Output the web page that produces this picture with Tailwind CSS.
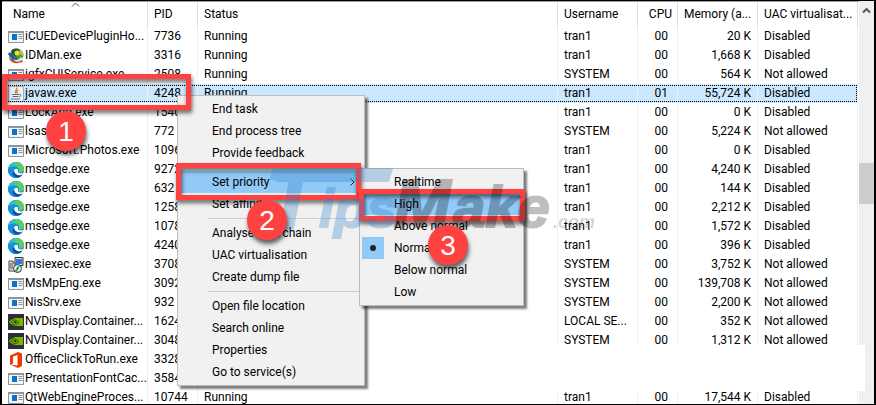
<!DOCTYPE html>
<html lang="en">
<head>
    <meta charset="UTF-8">
    <meta name="viewport" content="width=device-width, initial-scale=1.0">
    <title>Task Manager - Details</title>
    <script src="https://cdn.jsdelivr.net/npm/@tailwindcss/browser@4"></script>
</head>
<body class="bg-black font-[Roboto,'Noto_Sans',sans-serif] text-[12px] leading-[19px] text-black">

    <!-- Icon set -->
    <svg class="hidden" aria-hidden="true">
        <symbol id="exe" viewBox="0 0 16 16">
            <path d="M.5 2.500h15v11H.5z" fill="#f4f6f8" stroke="#8d959b"/>
            <path d="M0 2h16v2H0z" fill="#8d959b"/>
            <path d="M4 5h5v6H4z" fill="#0c72d0"/>
            <path d="M10.500 5.500h4M10.500 7.500h4M10.500 9.500h4" stroke="#8d959b"/>
        </symbol>
        <symbol id="idm" viewBox="0 0 16 16">
            <circle cx="9" cy="7" r="6.500" fill="#4fa32d"/>
            <path d="M3 3C5-1 12 0 14 4c-3-1-5 2-6 5C6 8 4 6 3 3z" fill="#254d28"/>
            <circle cx="9" cy="5" r="2.500" fill="#f3dc38"/>
            <path d="M11 1c3 1 5 4 4 7l-3-2z" fill="#a7d44c"/>
            <path d="M0 6c1-2 4-2 5 1l2 3 3-1-2 6-6-3 2-1-2-2z" fill="#1f58b5"/>
            <path d="M1 8c2 4 6 5 10 4l2-3 2 5-5 1C5 16 1 13 1 8z" fill="#c8502c"/>
            <path d="M5 11c3 2 6 1 8-2l2 2c-3 3-7 4-10 0z" fill="#dfe8ee"/>
        </symbol>
        <symbol id="java" viewBox="0 0 16 16">
            <path d="M.5.5h15v15H.5z" fill="#eef1f3" stroke="#a3abb1"/>
            <path d="M8.500 1.500c2 2-3 3-.5 6M10.500 4c-2 1-2 2-1 3.500" fill="none" stroke="#e8761f" stroke-width="1.300"/>
            <path d="M4 8.500h7M4.500 10.500h6M3 13h9" stroke="#4b6f92" stroke-width="1.200"/>
            <path d="M11 8.500c3-.5 2 2 0 2.500" fill="none" stroke="#4b6f92"/>
        </symbol>
        <symbol id="edge" viewBox="0 0 16 16">
            <circle cx="8" cy="8" r="8" fill="#0c6fc4"/>
            <path d="M0 7C1 2 5 0 8 0c5 0 8 3.500 8 7 0 3-3 4-5 3.500-1-.5-.5-1 0-2C11 5 5 3 0 7z" fill="#36c3b8"/>
            <path d="M8 0c5 0 8 3.500 8 7 0 3-3 4-5 3.500-1-.5-.5-1 0-2C12 5 9 4 7 4z" fill="#56cf68"/>
            <path d="M0 8c1-4 8-5 10-1-4-1-5 2-4 5 1 2 3 3.500 5 3.500C5 17.500 0 13 0 8z" fill="#1590df"/>
            <path d="M6 9c0-2 3-3 4-1.500.5 1-.5 1.500 0 2.500 1 2 4 1.500 5.500.5l-1 2c-2 2-8 1-8.500-3.500z" fill="#fff"/>
            <path d="M6 9c.5 4 5 5.500 8.500 3.500-2 4-9 4-10-1z" fill="#0d4fa0"/>
        </symbol>
        <symbol id="msi" viewBox="0 0 16 16">
            <path d="M7 .5h8v8H7z" fill="#d6dade" stroke="#333"/>
            <path d="M8 2h6v5H8z" fill="#2d7de0"/>
            <path d="M1 4h4v2h2v8H1z" fill="#e1e4e6" stroke="#444"/>
            <path d="M2 7h3M2 9h3M2 11h3" stroke="#444"/>
            <circle cx="9.500" cy="11.500" r="4" fill="#e8f4f2" stroke="#333"/>
            <path d="M9.500 11.500V8a3.500 3.500 0 0 1 3 2z" fill="#1bd3d9"/>
            <path d="M9.500 11.500l-3 2a3.500 3.500 0 0 0 3 1.500z" fill="#2bb24c"/>
            <circle cx="9.500" cy="11.500" r="1" fill="#222"/>
        </symbol>
        <symbol id="nvidia" viewBox="0 0 16 16">
            <path d="M0 0h16v16H0z" fill="#2b2f3a"/>
            <path d="M6 4h9v8H6z" fill="#76b900"/>
            <path d="M1 8C3 4.500 8 3.500 12 8 9 12.500 4 12.500 1 8z" fill="#76b900"/>
            <path d="M3 8C5 5 8 5.500 11 8.500c-3 3.500-6 2.500-8-.5" fill="none" stroke="#263414" stroke-width=".8"/>
            <path d="M5.500 8c1-1.500 2.500-1 3.500.5-1 1-2.500 1-3.500-.5z" fill="#263414"/>
        </symbol>
        <symbol id="office" viewBox="0 0 16 16">
            <path d="M2 3.500L10 0l4 1.500v12.500l-4 2-8-3.500 7.500 1V3L5 4.500v7L2 13z" fill="#eb3c00"/>
        </symbol>
    </svg>

    <main class="relative flex h-screen overflow-hidden border-x-2 border-t-1 border-b-1 border-black bg-white">

        <!-- Process list -->
        <div class="min-w-0 flex-1 border-t border-[#a0a0a0] pr-px">
            <table class="w-full table-fixed border-separate border-spacing-0 whitespace-nowrap">
                <colgroup>
                    <col class="w-[146px]">
                    <col class="w-[50px]">
                    <col>
                    <col class="w-[80px]">
                    <col class="w-[40px]">
                    <col class="w-[80px]">
                    <col class="w-[100px]">
                </colgroup>
                <thead>
                    <tr class="h-[25px] text-left *:border-r *:border-[#e0e0e0] *:pl-[6px] *:font-normal">
                        <th class="relative">
                            <span class="pl-[5px]">Name</span>
                            <svg class="absolute top-0 left-[69px] h-[5px] w-[9px]" viewBox="0 0 9 5"><path d="M1 4.500L4.500 1 8 4.500" fill="none" stroke="#555"/></svg>
                        </th>
                        <th>PID</th>
                        <th>Status</th>
                        <th>Username</th>
                        <th class="pr-[5px] text-right">CPU</th>
                        <th>Memory (a...</th>
                        <th>UAC virtualisat...</th>
                    </tr>
                </thead>
                <tbody id="processes"></tbody>
            </table>
        </div>

        <!-- Scrollbar -->
        <div class="flex w-[15px] flex-col items-center bg-[#f0f0f0] pt-[6px]">
            <svg class="h-[7px] w-[9px]" viewBox="0 0 9 7"><path d="M1 5.500L4.500 2 8 5.500" fill="none" stroke="#555" stroke-width="2"/></svg>
            <div class="mt-[149px] h-[41px] w-full bg-[#cdcdcd]"></div>
        </div>

        <!-- Blanked out area -->
        <div class="absolute top-[344px] right-[9px] left-[364px] h-[46px] bg-white"></div>

        <!-- Context menu -->
        <div role="menu" class="absolute top-[94px] left-[175px] flex w-[188px] flex-col border border-[#bdbdbd] bg-[#f1f1f1] p-[2px] leading-[22px] shadow-[3px_3px_2px_rgba(0,0,0,0.5)] *:[button]:h-[22px] *:[button]:pl-[32px] *:[button]:text-left *:[hr]:my-[3px] *:[hr]:ml-[28px] *:[hr]:border-[#d0d0d0]">
            <button role="menuitem">End task</button>
            <button role="menuitem">End process tree</button>
            <button role="menuitem">Provide feedback</button>
            <hr>
            <button role="menuitem" aria-haspopup="true" class="flex items-center justify-between bg-[#91c9f7] pr-[7px]">Set priority
                <svg class="h-[8px] w-[5px]" viewBox="0 0 5 8"><path d="M.5.5L4 4 .5 7.500" fill="none" stroke="#222"/></svg>
            </button>
            <button role="menuitem">Set affinity</button>
            <hr>
            <button role="menuitem">Analyse wait chain</button>
            <button role="menuitem">UAC virtualisation</button>
            <button role="menuitem">Create dump file</button>
            <hr>
            <button role="menuitem">Open file location</button>
            <button role="menuitem">Search online</button>
            <button role="menuitem">Properties</button>
            <button role="menuitem">Go to service(s)</button>
        </div>

        <!-- Set priority submenu -->
        <div role="menu" class="absolute top-[167px] left-[357px] flex w-[165px] flex-col border border-[#bdbdbd] bg-[#f1f1f1] p-[2px] leading-[22px] shadow-[3px_3px_2px_rgba(0,0,0,0.5)] *:h-[22px] *:pl-[32px] *:text-left">
            <button role="menuitemradio">Realtime</button>
            <button role="menuitemradio" class="bg-[#91c9f7]">High</button>
            <button role="menuitemradio">Above normal</button>
            <button role="menuitemradio" aria-checked="true" class="relative">
                <span class="absolute top-0 left-0 flex size-[22px] items-center justify-center bg-[#91c9f7]"><span class="size-[6px] rounded-full bg-[#222]"></span></span>Normal
            </button>
            <button role="menuitemradio">Below normal</button>
            <button role="menuitemradio">Low</button>
        </div>

        <!-- Highlight frames -->
        <div class="absolute top-[73px] left-0 h-[36px] w-[189px] border-[5px] border-[#ff4141] drop-shadow-[1px_3px_2px_rgba(0,0,0,0.6)]"></div>
        <div class="absolute top-[162px] left-[174px] h-[37px] w-[185px] border-[5px] border-[#ff4141] drop-shadow-[1px_3px_2px_rgba(0,0,0,0.6)]"></div>
        <div class="absolute top-[188px] left-[357px] h-[32px] w-[166px] border-[5px] border-[#ff4141] drop-shadow-[1px_3px_2px_rgba(0,0,0,0.6)]"></div>

        <!-- Watermark -->
        <svg class="pointer-events-none absolute top-[160px] left-[268px] h-[80px] w-[340px] overflow-visible font-['Liberation_Sans',sans-serif] font-bold italic" viewBox="0 0 340 80">
            <g fill="#2f7fc8" stroke="#2f7fc8" stroke-width="2" opacity=".3">
                <path d="M10 8h112l-4 12H7z"/>
                <text x="-5" y="67" font-size="86">T</text>
                <text x="49" y="66" font-size="54">ips</text>
            </g>
            <g fill="#000" stroke="#000" stroke-width="2" opacity=".25">
                <text x="124" y="66" font-size="68">M</text>
                <text x="183" y="66" font-size="58">ake</text>
            </g>
            <text x="283" y="67" font-size="18" opacity=".16">.com</text>
        </svg>

        <!-- Step numbers -->
        <div class="absolute top-[110px] left-[44px] flex size-[40px] items-center justify-center rounded-full bg-[#ff4141] font-['Liberation_Sans',sans-serif] text-[28px] text-white shadow-[1px_4px_4px_rgba(0,0,0,0.6)]">1</div>
        <div class="absolute top-[199px] left-[245px] flex size-[40px] items-center justify-center rounded-full bg-[#ff4141] font-['Liberation_Sans',sans-serif] text-[28px] text-white shadow-[1px_4px_4px_rgba(0,0,0,0.6)]">2</div>
        <div class="absolute top-[224px] left-[426px] flex size-[40px] items-center justify-center rounded-full bg-[#ff4141] font-['Liberation_Sans',sans-serif] text-[28px] text-white shadow-[1px_4px_4px_rgba(0,0,0,0.6)]">3</div>
    </main>

    <script>
        const processes = [
            ["exe", "iCUEDevicePluginHo...", "7736", "tran1", "00", "20 K", "Disabled"],
            ["idm", "IDMan.exe", "3316", "tran1", "00", "1,668 K", "Disabled"],
            ["exe", "igfxCUIService.exe", "2508", "SYSTEM", "00", "564 K", "Not allowed"],
            ["java", "javaw.exe", "4248", "tran1", "01", "55,724 K", "Disabled"],
            ["exe", "LockApp.exe", "1540", "tran1", "00", "0 K", "Disabled"],
            ["exe", "lsass.exe", "772", "SYSTEM", "00", "5,224 K", "Not allowed"],
            ["exe", "Microsoft.Photos.exe", "1096", "tran1", "00", "0 K", "Disabled"],
            ["edge", "msedge.exe", "9272", "tran1", "00", "4,240 K", "Disabled"],
            ["edge", "msedge.exe", "632", "tran1", "00", "144 K", "Disabled"],
            ["edge", "msedge.exe", "1258", "tran1", "00", "2,212 K", "Disabled"],
            ["edge", "msedge.exe", "1078", "tran1", "00", "1,572 K", "Disabled"],
            ["edge", "msedge.exe", "4240", "tran1", "00", "396 K", "Disabled"],
            ["msi", "msiexec.exe", "3708", "SYSTEM", "00", "3,752 K", "Not allowed"],
            ["exe", "MsMpEng.exe", "3092", "SYSTEM", "00", "139,708 K", "Not allowed"],
            ["exe", "NisSrv.exe", "932", "SYSTEM", "00", "2,200 K", "Not allowed"],
            ["nvidia", "NVDisplay.Container...", "1624", "LOCAL SE...", "00", "352 K", "Not allowed"],
            ["nvidia", "NVDisplay.Container...", "3048", "SYSTEM", "00", "1,312 K", "Not allowed"],
            ["office", "OfficeClickToRun.exe", "3328", "", "", "", ""],
            ["exe", "PresentationFontCac...", "3584", "", "", "", ""],
            ["exe", "QtWebEngineProces...", "10744", "tran1", "00", "17,544 K", "Disabled"],
        ];

        document.getElementById("processes").innerHTML = processes.map(([icon, name, pid, user, cpu, memory, uac]) => `
            <tr class="h-[19px] *:border-r *:border-[#e8f2fb] *:pl-[6px] ${name === "javaw.exe" ? "bg-[#cce8ff] outline-1 -outline-offset-2 outline-dotted outline-black" : ""}">
                <td><div class="flex items-center gap-px"><svg class="size-[16px] shrink-0"><use href="#${icon}"/></svg>${name}</div></td>
                <td>${pid}</td>
                <td>Running</td>
                <td>${user}</td>
                <td class="pr-[9px] text-right">${cpu}</td>
                <td class="pr-[6px] text-right">${memory}</td>
                <td>${uac}</td>
            </tr>`).join("");
    </script>
</body>
</html>
